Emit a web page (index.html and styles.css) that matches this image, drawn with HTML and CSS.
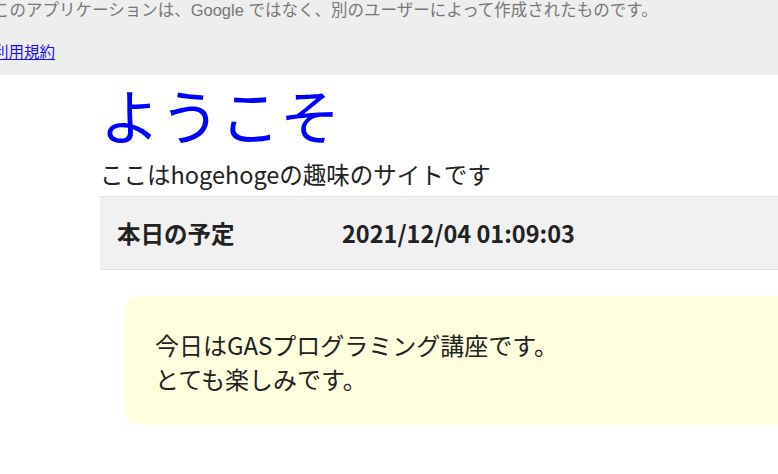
FILE: index.html
```html
<!DOCTYPE html>
<html lang="ja">
  <head>
    <meta charset="UTF-8" />
    <meta name="viewport" content="width=device-width, initial-scale=1.0" />
    <title>ようこそ</title>
    <link rel="stylesheet" href="styles.css">
  </head>
  <body>
    <div class="warning-bar">
      <div class="warning-inner">
        <p class="warning-text">このアプリケーションは、Google ではなく、別のユーザーによって作成されたものです。</p>
        <a class="terms-link" href="#">利用規約</a>
      </div>
    </div>

    <div class="page">
      <h1 class="title">ようこそ</h1>
      <p class="lead">ここはhogehogeの趣味のサイトです</p>

      <div class="schedule-row">
        <div class="schedule-label">本日の予定</div>
        <div class="schedule-date">2021/12/04 01:09:03</div>
      </div>

      <div class="note">
        今日はGASプログラミング講座です。<br />
        とても楽しみです。
      </div>
    </div>
  </body>
</html>
```

FILE: styles.css
```css
html,
body {
  margin: 0;
  overflow: hidden;
}
body {
  background-color: #ffffff;
  font-family: "Noto Sans CJK JP", sans-serif;
  color: #222222;
}
.warning-bar {
  background-color: #eeeeee;
  height: 75px;
  overflow: hidden;
}
.warning-inner {
  margin-left: -7px;
  font-family: "Liberation Sans", "Noto Sans CJK JP", sans-serif;
}
.warning-text {
  margin: 0;
  font-size: 16.5px;
  line-height: 20px;
  color: #777777;
  white-space: nowrap;
}
.terms-link {
  display: inline-block;
  margin-top: 23px;
  font-size: 15.5px;
  line-height: 20px;
  color: #1a0dff;
  text-decoration: underline;
}
.page {
  margin-left: 100px;
  width: 900px;
}
.title {
  margin: 0;
  padding-top: 1px;
  font-size: 60px;
  font-weight: normal;
  line-height: 76px;
  color: #0000ff;
}
.lead {
  margin: 0;
  font-size: 23.5px;
  line-height: 44px;
  color: #222222;
}
.schedule-row {
  display: flex;
  align-items: center;
  height: 72px;
  background-color: #f1f1f1;
  border-top: 1px solid #dde1e6;
  border-bottom: 1px solid #dde1e6;
  font-size: 23.5px;
  font-weight: bold;
  color: #222222;
}
.schedule-label {
  width: 225px;
  padding-left: 17px;
}
.note {
  margin: 26px 0 0 24px;
  padding: 32px 30px 29px 31px;
  background-color: #ffffe0;
  border-radius: 16px;
  font-size: 24px;
  line-height: 34px;
  color: #222222;
}
```
